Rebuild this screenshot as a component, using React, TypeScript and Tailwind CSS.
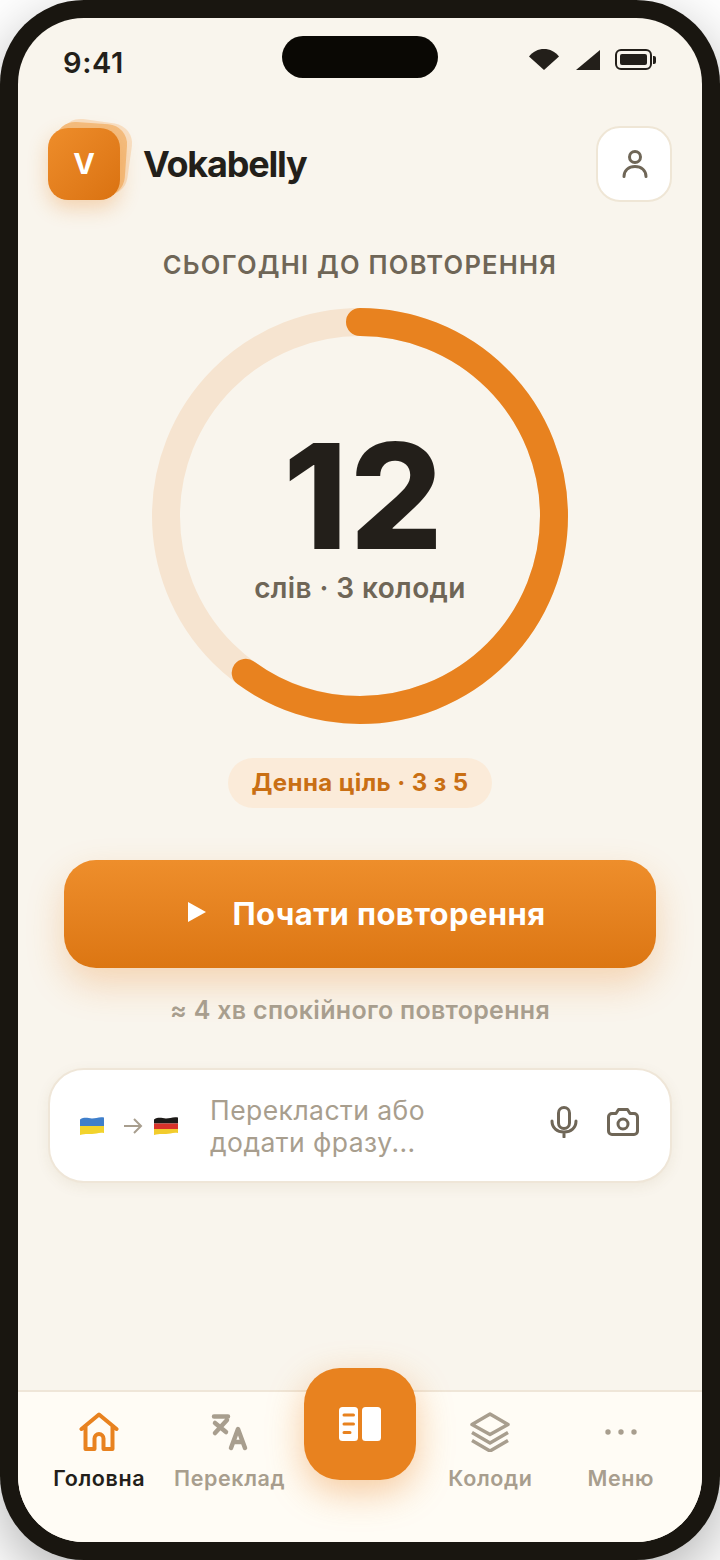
const dim = "#a89e8e";

function StatusIcons() {
  return (
    <div className="flex items-center">
      <svg width="30" height="21" viewBox="0 0 30 21" className="mr-[17px]">
        <path d="M0 7.5C4 2.5 9 0 15 0s11 2.5 15 7.5L15 21Z" fill="#231f1a" />
      </svg>
      <svg width="24" height="20" viewBox="0 0 24 20" className="mr-[15px]">
        <path d="M24 0v20H0Z" fill="#231f1a" />
      </svg>
      <div className="flex h-[21px] w-[37px] items-center justify-center rounded-[6px] border-2 border-[#231f1a]">
        <div className="h-[11px] w-[27px] rounded-[2px] bg-[#231f1a]" />
      </div>
      <div className="ml-[1px] h-[8px] w-[3px] rounded-r-[2px] bg-[#231f1a]" />
    </div>
  );
}

function Ring() {
  return (
    <svg width="416" height="416" viewBox="0 0 416 416" className="block">
      <circle cx="208" cy="208" r="194" fill="none" stroke="#f6e4d0" strokeWidth="28" />
      <circle
        cx="208"
        cy="208"
        r="194"
        fill="none"
        stroke="#e8821f"
        strokeWidth="28"
        strokeLinecap="round"
        strokeDasharray="731.4 1218.9"
        transform="rotate(-90 208 208)"
      />
    </svg>
  );
}

function FlagUa() {
  return (
    <svg width="26" height="20" viewBox="0 0 26 20">
      <path d="M1 3.500C6 .5 9 2.500 13 2.500S20 .5 25 1.500V10H1Z" fill="#3f7fcb" />
      <path d="M1 10H25V17C20 16 17 18 13 18S6 17.500 1 19Z" fill="#f2d32c" />
    </svg>
  );
}

function FlagDe() {
  return (
    <svg width="26" height="20" viewBox="0 0 26 20">
      <path d="M1 3.500C6 .5 9 2.500 13 2.500S20 .5 25 1.500V7.500H1Z" fill="#1d1a18" />
      <rect x="1" y="7.500" width="24" height="5.500" fill="#d8322a" />
      <path d="M1 13H25V17C20 16 17 18 13 18S6 17.500 1 19Z" fill="#f2cc2c" />
    </svg>
  );
}

function NavItem({ label, active, children }: { label: string; active?: boolean; children?: React.ReactNode }) {
  return (
    <div className="flex flex-col items-center">
      <div className="flex h-[40px] w-[40px] items-center justify-center">{children}</div>
      <span className={`mt-[13px] text-[21.5px] leading-[26px] font-semibold tracking-[0.6px] ${active ? "text-[#231f1a]" : "text-[#a89e8e]"}`}>
        {label}
      </span>
    </div>
  );
}

export default function App() {
  return (
    <div className="h-[1560px] w-[720px] overflow-hidden bg-white font-[Inter,sans-serif]">
      <div className="h-full rounded-[84px] bg-[#191610] p-[18px] shadow-[0_20px_60px_rgba(0,0,0,0.3)]">
        <div className="relative flex h-full flex-col overflow-hidden rounded-[66px] bg-[#f9f5ed]">
          {/* dynamic island */}
          <div className="absolute top-[18px] left-[264px] h-[42px] w-[156px] rounded-full bg-[#0a0804]" />

          <div className="flex h-[108px] items-start justify-between pt-[28px] pr-[46px] pl-[45px]">
            <span className="text-[29px] leading-[34px] font-semibold tracking-[0.6px] text-[#231f1a]">9:41</span>
            <div className="pt-[3px]">
              <StatusIcons />
            </div>
          </div>

          <div className="flex h-[76px] items-center justify-between px-[30px]">
            <div className="flex items-center gap-[23px]">
              <div className="relative h-[72px] w-[72px]">
                <div className="absolute top-[-7px] left-[10px] h-[72px] w-[72px] rotate-[8deg] rounded-[20px] bg-[#f8dfc3]" />
                <div className="absolute top-[-5px] left-[6px] h-[72px] w-[72px] rotate-[4deg] rounded-[20px] bg-[#f4bd7f]" />
                <div className="absolute inset-0 flex items-center justify-center rounded-[20px] bg-linear-to-br from-[#ee8d2a] to-[#da7210] text-[29px] font-bold text-white shadow-[0_8px_20px_rgba(232,130,31,0.3)]">
                  V
                </div>
              </div>
              <span className="text-[36px] leading-[44px] font-bold tracking-[-1.2px] text-[#231f1a]">Vokabelly</span>
            </div>
            <div className="flex h-[76px] w-[76px] items-center justify-center rounded-[24px] border-2 border-[#efe6d6] bg-white">
              <svg width="26" height="28" viewBox="0 0 26 28" fill="none" stroke="#6f6657" strokeWidth="3" strokeLinecap="round" className="ml-[1px]">
                <circle cx="13" cy="7" r="5.500" />
                <path d="M2 26.500c0-6 4.500-10 11-10s11 4 11 10" />
              </svg>
            </div>
          </div>

          <div className="mt-[48px] text-center text-[25.5px] leading-[30px] font-semibold tracking-[1.25px] text-[#6f6657]">
            СЬОГОДНІ ДО ПОВТОРЕННЯ
          </div>

          <div className="relative mx-auto mt-[28px] h-[416px] w-[416px]">
            <Ring />
            <div className="absolute inset-0 flex flex-col items-center">
              <span className="mt-[130px] ml-[8px] text-[146px] leading-[116px] font-extrabold tracking-[2px] text-[#231f1a]">12</span>
              <span className="mt-[17px] text-[28px] leading-[34px] font-semibold tracking-[0.4px] text-[#6f6657]">слів · 3 колоди</span>
            </div>
          </div>

          <div className="mx-auto mt-[34px] flex h-[50px] w-[264px] items-center justify-center rounded-full bg-[#fbebd9] text-[24px] font-bold tracking-[0.4px] text-[#c96f14]">
            Денна ціль · 3 з 5
          </div>

          <div className="mx-[46px] mt-[52px] flex h-[108px] items-center justify-center gap-[26px] rounded-[32px] bg-linear-to-b from-[#ee8e2b] to-[#dc7612] pl-[14px] shadow-[0_16px_36px_rgba(232,130,31,0.28)]">
            <svg width="18" height="20" viewBox="0 0 18 20" className="mt-[-4px]">
              <path d="M0 0 18 10 0 20Z" fill="#fff" />
            </svg>
            <span className="text-[31px] leading-[36px] font-bold tracking-[0.4px] text-white">Почати повторення</span>
          </div>

          <div className="mt-[26px] text-center text-[25px] leading-[32px] font-semibold tracking-[0.3px] text-[#a89e8e]">
            ≈ 4 хв спокійного повторення
          </div>

          <div className="mx-[30px] mt-[42px] flex h-[115px] items-center rounded-[36px] border-2 border-[#efe6d8] bg-white pr-[31px] pl-[29px] shadow-[0_4px_14px_rgba(120,90,40,0.08)]">
            <div className="flex items-center">
              <FlagUa />
              <svg width="20" height="18" viewBox="0 0 20 18" fill="none" stroke={dim} strokeWidth="2" className="mr-[10px] ml-[18px]">
                <path d="M1 9h17M11 2l7 7-7 7" />
              </svg>
              <FlagDe />
            </div>
            <div className="ml-[31px] text-[26.5px] leading-[32px] tracking-[0.45px] text-[#a89e8e]">
              Перекласти або
              <br />
              додати фразу...
            </div>
            <div className="mt-[-7px] ml-auto flex items-center gap-[29px]">
              <svg width="28" height="32" viewBox="0 0 28 32" fill="none" stroke="#6f6657" strokeWidth="3" strokeLinecap="round">
                <rect x="8.500" y="1.500" width="11" height="21" rx="5.500" />
                <path d="M2 15c0 7 5 11 12 11s12-4 12-11M14 26v5" />
              </svg>
              <svg width="32" height="28" viewBox="0 0 32 28" fill="none" stroke="#6f6657" strokeWidth="3" strokeLinejoin="round">
                <path d="M5 5.500h4l2.500-4h9l2.500 4h4a3.500 3.500 0 0 1 3.500 3.500v14a3.500 3.500 0 0 1-3.500 3.500H5A3.500 3.500 0 0 1 1.500 23V9A3.500 3.500 0 0 1 5 5.500Z" />
                <circle cx="16" cy="16" r="5" />
              </svg>
            </div>
          </div>

          <div className="relative mt-auto h-[152px] border-t-2 border-[#efe6d8] bg-[#fffcf5]">
            <div className="absolute top-[-24px] left-[286px] flex h-[112px] w-[112px] items-center justify-center rounded-[36px] bg-[#e8821f] shadow-[0_12px_36px_rgba(232,130,31,0.4)]">
              <svg width="42" height="34" viewBox="0 0 42 34">
                <rect width="19" height="34" rx="3.500" fill="#fff" />
                <rect x="23" width="19" height="34" rx="3.500" fill="#fff" />
                <path d="M5 8h9.500M5 17h9.500M5 25.500h6" stroke="#e8821f" strokeWidth="3" strokeLinecap="round" />
              </svg>
            </div>
            <div className="grid grid-cols-5 px-[16px] pt-[20px]">
              <NavItem label="Головна" active>
                <svg width="40" height="40" viewBox="0 0 40 40" fill="none" stroke="#e8821f" strokeWidth="4" strokeLinecap="round" strokeLinejoin="round">
                  <path d="M2.500 17 20 2.500 37.500 17M6.500 14.500V37H15.500V26.500a4.500 4.500 0 0 1 9 0V37H33.500V14.500" />
                </svg>
              </NavItem>
              <NavItem label="Переклад">
                <svg width="40" height="40" viewBox="0 0 40 40" fill="none" stroke={dim} strokeWidth="4.500" strokeLinecap="round" strokeLinejoin="round">
                  <path d="M4 4.500H18M17 8 5 21M5 11 16 20M21 36 28 17 35 36M23.500 30H32.500" />
                </svg>
              </NavItem>
              <div />
              <NavItem label="Колоди">
                <svg width="40" height="40" viewBox="0 0 40 40" fill="none" stroke={dim} strokeWidth="3.500" strokeLinejoin="round">
                  <path d="M20 2 38 12.500 20 22.500 2 12.500ZM2 20.500 20 31 38 20.500M2 28.500 20 39 38 28.500" />
                </svg>
              </NavItem>
              <NavItem label="Меню">
                <svg width="40" height="12" viewBox="0 0 40 12" fill={dim}>
                  <circle cx="7" cy="6" r="2.700" />
                  <circle cx="20" cy="6" r="2.700" />
                  <circle cx="33" cy="6" r="2.700" />
                </svg>
              </NavItem>
            </div>
          </div>
        </div>
      </div>
    </div>
  );
}
